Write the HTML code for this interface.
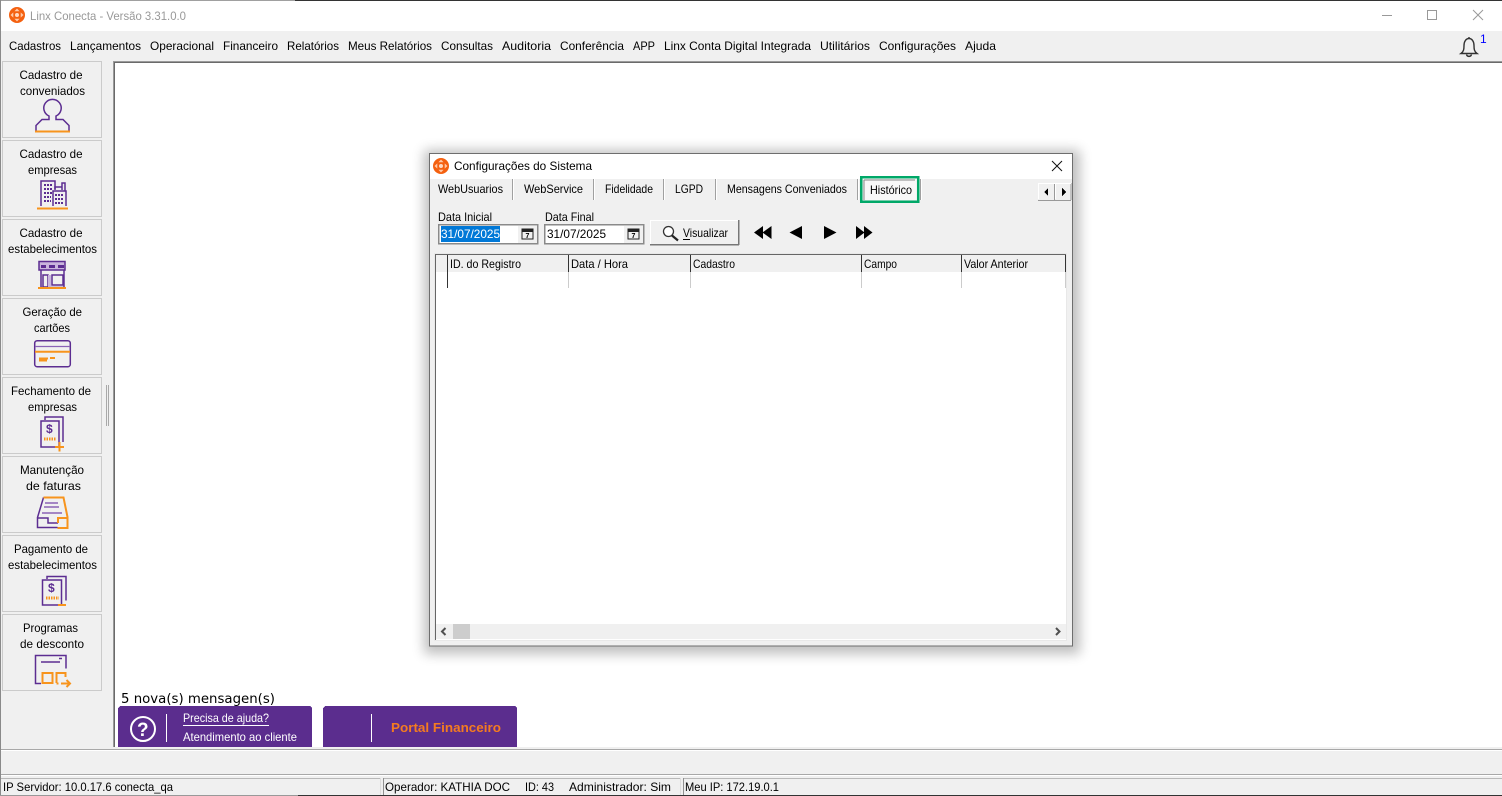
<!DOCTYPE html>
<html lang="pt-BR"><head><meta charset="utf-8"><title>Linx Conecta</title>
<style>
html,body{margin:0;padding:0;background:#f0f0f0;overflow:hidden}
svg{display:block}
text{font-family:"Liberation Sans",sans-serif;font-size:12px;fill:#000;white-space:pre}
.g{fill:none;stroke:#5c2d91;stroke-width:1.5}
.o{fill:none;stroke:#f7941d;stroke-width:2}
.b{fill:#f0f0f0;stroke:#cbcbcb}
</style></head><body>
<svg width="1502" height="796" viewBox="0 0 1502 796" xmlns="http://www.w3.org/2000/svg" shape-rendering="crispEdges">
<defs>
<filter id="sh" x="-10%" y="-10%" width="120%" height="120%"><feGaussianBlur stdDeviation="6"/></filter>
<g id="logo"><circle cx="0" cy="0" r="8" fill="#f4600f" shape-rendering="auto"/><path d="M0-6.500l2.600 2.800h-5.200zM0 6.500l2.600-2.800h-5.200zM-6.500 0l2.800-2.600v5.200zM6.500 0l-2.800-2.600v5.200z" fill="#ffc9a8" shape-rendering="auto"/><circle r="2" fill="#ffd9c2" shape-rendering="auto"/></g>
</defs>
<rect width="1502" height="796" fill="#f0f0f0"/>
<!-- title -->
<rect x="0" y="0" width="1502" height="31" fill="#fff"/>
<rect x="0" y="0" width="295" height="1" fill="#a0a0a0"/><rect x="295" y="0" width="1207" height="1" fill="#333"/>
<use href="#logo" x="17" y="15"/>
<text x="30" y="20" textLength="156" lengthAdjust="spacingAndGlyphs" style="fill:#999">Linx Conecta - Versão 3.31.0.0</text>
<rect x="1382" y="15" width="10" height="1" fill="#999"/>
<rect x="1427.500" y="10.500" width="9" height="9" fill="none" stroke="#999"/>
<path d="M1473 10l10 10M1483 10l-10 10" stroke="#999" fill="none" shape-rendering="auto"/>
<!-- menu -->
<g>
<text x="9" y="50" textLength="52" lengthAdjust="spacingAndGlyphs">Cadastros</text>
<text x="70" y="50" textLength="71" lengthAdjust="spacingAndGlyphs">Lançamentos</text>
<text x="150" y="50" textLength="64" lengthAdjust="spacingAndGlyphs">Operacional</text>
<text x="223" y="50" textLength="55" lengthAdjust="spacingAndGlyphs">Financeiro</text>
<text x="287" y="50" textLength="52" lengthAdjust="spacingAndGlyphs">Relatórios</text>
<text x="348" y="50" textLength="84" lengthAdjust="spacingAndGlyphs">Meus Relatórios</text>
<text x="441" y="50" textLength="52" lengthAdjust="spacingAndGlyphs">Consultas</text>
<text x="502" y="50" textLength="49" lengthAdjust="spacingAndGlyphs">Auditoria</text>
<text x="560" y="50" textLength="64" lengthAdjust="spacingAndGlyphs">Conferência</text>
<text x="633" y="50" textLength="22" lengthAdjust="spacingAndGlyphs">APP</text>
<text x="664" y="50" textLength="147" lengthAdjust="spacingAndGlyphs">Linx Conta Digital Integrada</text>
<text x="820" y="50" textLength="50" lengthAdjust="spacingAndGlyphs">Utilitários</text>
<text x="879" y="50" textLength="77" lengthAdjust="spacingAndGlyphs">Configurações</text>
<text x="965" y="50" textLength="31" lengthAdjust="spacingAndGlyphs">Ajuda</text>
</g>
<path d="M1461 53.500c2.800-2 3-4.500 3-8 0-4 2-7 5-7s5 3 5 7c0 3.500.2 6 3 8zM1466.500 54.500a2.600 2.600 0 0 0 5 0M1469 38.500v-1.500" fill="none" stroke="#333" stroke-width="1.400" shape-rendering="auto"/>
<text x="1480" y="43" style="fill:#0000ff">1</text>
<!-- main panel -->
<rect x="113" y="61" width="1389" height="687" fill="#fff"/>
<rect x="113" y="61" width="1389" height="1" fill="#9a9a9a"/>
<rect x="113" y="62" width="1389" height="1" fill="#6a6a6a"/>
<rect x="113" y="61" width="1" height="687" fill="#9a9a9a"/>
<rect x="114" y="62" width="1" height="686" fill="#6a6a6a"/>
<rect x="106" y="385" width="1" height="41" fill="#a8a8a8"/><rect x="108" y="385" width="1" height="41" fill="#a8a8a8"/>
<!-- sidebar -->
<g>
<rect class="b" x="2.500" y="61.500" width="99" height="76"/>
<rect class="b" x="2.500" y="140.500" width="99" height="76"/>
<rect class="b" x="2.500" y="219.500" width="99" height="76"/>
<rect class="b" x="2.500" y="298.500" width="99" height="76"/>
<rect class="b" x="2.500" y="377.500" width="99" height="76"/>
<rect class="b" x="2.500" y="456.500" width="99" height="76"/>
<rect class="b" x="2.500" y="535.500" width="99" height="76"/>
<rect class="b" x="2.500" y="614.500" width="99" height="76"/>
<text x="19.500" y="79" textLength="63" lengthAdjust="spacingAndGlyphs">Cadastro de</text>
<text x="20" y="95" textLength="65" lengthAdjust="spacingAndGlyphs">conveniados</text>
<text x="19.500" y="158" textLength="63" lengthAdjust="spacingAndGlyphs">Cadastro de</text>
<text x="28" y="174" textLength="49" lengthAdjust="spacingAndGlyphs">empresas</text>
<text x="19.500" y="237" textLength="63" lengthAdjust="spacingAndGlyphs">Cadastro de</text>
<text x="8" y="253" textLength="89" lengthAdjust="spacingAndGlyphs">estabelecimentos</text>
<text x="22.500" y="316" textLength="59.500" lengthAdjust="spacingAndGlyphs">Geração de</text>
<text x="34" y="332" textLength="36" lengthAdjust="spacingAndGlyphs">cartões</text>
<text x="11" y="395" textLength="80" lengthAdjust="spacingAndGlyphs">Fechamento de</text>
<text x="28" y="411" textLength="49" lengthAdjust="spacingAndGlyphs">empresas</text>
<text x="20" y="474" textLength="64" lengthAdjust="spacingAndGlyphs">Manutenção</text>
<text x="26" y="490" textLength="55" lengthAdjust="spacingAndGlyphs">de faturas</text>
<text x="14" y="553" textLength="74" lengthAdjust="spacingAndGlyphs">Pagamento de</text>
<text x="8" y="569" textLength="89" lengthAdjust="spacingAndGlyphs">estabelecimentos</text>
<text x="23" y="632" textLength="55" lengthAdjust="spacingAndGlyphs">Programas</text>
<text x="20" y="648" textLength="64" lengthAdjust="spacingAndGlyphs">de desconto</text>
</g>
<g shape-rendering="auto">
<!-- person -->
<path class="g" d="M36 130.500v-5l6-6h7v-3.500a8.700 8.700 0 1 1 7 0v3.500h7l6 6v5"/>
<path class="o" d="M35 131.500h35"/>
<!-- buildings -->
<path class="g" d="M41 206v-25h14v8"/>
<path d="M44 185h8M44 189h8M44 193h8M44 197h7M44 201h7" stroke="#5c2d91" stroke-width="2" stroke-dasharray="2 1" fill="none"/>
<path class="g" d="M53 206v-15h13v15M55 190v-3h7v3M62 187v-4h3v8"/>
<path d="M55 195h9M55 199h9M55 203h9" stroke="#5c2d91" stroke-width="2" stroke-dasharray="2 1" fill="none"/>
<path class="o" d="M37 208.500h31"/>
<!-- store -->
<path d="M39 261.500h26v8.500h-26z" fill="#c9b5dd" stroke="#5c2d91" stroke-width="1.500"/>
<rect x="41" y="265" width="5" height="3" fill="#5c2d91"/><rect x="49" y="265" width="6" height="3" fill="#5c2d91"/><rect x="58" y="265" width="6" height="3" fill="#5c2d91"/>
<path class="g" d="M41 270v17.500h23v-17.500M43 275h5v12h-5zM52 275h11v10h-11z"/>
<rect x="48" y="275" width="3" height="12" fill="#c9b5dd"/>
<path class="o" d="M38 288h28" stroke-width="1.500"/>
<!-- card -->
<rect class="g" x="34.700" y="340.700" width="35.600" height="26" rx="2.500"/>
<path d="M35 346.500h35" stroke="#8a63b6" stroke-width="1.200" fill="none"/>
<path class="o" d="M35 351.700h35M39 358.500h9M50 358h5M39 360.500h8" stroke-width="1.500"/>
<!-- doc + -->
<path class="g" d="M45 420v-3h18v25M41 421h18v26h-18z"/>
<text x="46" y="433" style="font-weight:bold;font-size:12px;fill:#5c2d91">$</text>
<path d="M44 439h12" stroke="#f7941d" stroke-width="3" stroke-dasharray="1.500 1" fill="none"/>
<path d="M59.500 442v9.500M55 447h9" stroke="#f7941d" stroke-width="2" fill="none"/>
<!-- tray -->
<path class="g" d="M43.500 497.500l-6 20v10h20M37.500 518h10.500v5h10"/>
<path class="o" d="M43.500 497.500h20l4 19.500v11h-10"/>
<path class="o" d="M58 523v-5h9.500"/>
<path d="M45 503h13M44 507h15M42 513h20" stroke="#8a63b6" stroke-width="1.500" fill="none"/>
<!-- payment -->
<path class="g" d="M47 579v-2.500h19v24M42.500 580h19v25h-19z"/>
<text x="48" y="592" style="font-weight:bold;font-size:12px;fill:#5c2d91">$</text>
<path d="M46 598h13" stroke="#f7941d" stroke-width="3" stroke-dasharray="1.500 1" fill="none"/>
<path d="M58 605h8" stroke="#f7941d" stroke-width="2" fill="none"/>
<!-- discount -->
<path class="g" d="M41 683.500h-5.500v-28h30.500v13M41 662h19M59 658.500h3"/>
<path class="o" d="M42.500 673h10v10h-10zM56.500 683v-10h9v4M56.500 683.500h2M61 683.500h9M66.500 680l3.500 3.500-3.500 3.500"/>
</g>
<!-- dialog -->
<rect x="424" y="150" width="656" height="504" fill="#000" opacity=".25" filter="url(#sh)"/>
<rect x="429.500" y="153.500" width="643" height="492.500" fill="#f0f0f0" stroke="#6e6e6e"/>
<rect x="430" y="154" width="642" height="25" fill="#fff"/>
<use href="#logo" x="441" y="166"/>
<text x="454" y="170" textLength="138" lengthAdjust="spacingAndGlyphs">Configurações do Sistema</text>
<path d="M1052 161l10 10M1062 161l-10 10" stroke="#111" fill="none" shape-rendering="auto"/>
<!-- tabs -->
<text x="438" y="193" textLength="65" lengthAdjust="spacingAndGlyphs">WebUsuarios</text>
<rect x="512" y="179" width="1" height="21" fill="#a0a0a0"/><rect x="513" y="179" width="1" height="21" fill="#fff"/>
<text x="524" y="193" textLength="59" lengthAdjust="spacingAndGlyphs">WebService</text>
<rect x="593" y="179" width="1" height="21" fill="#a0a0a0"/><rect x="594" y="179" width="1" height="21" fill="#fff"/>
<text x="605" y="193" textLength="48" lengthAdjust="spacingAndGlyphs">Fidelidade</text>
<rect x="663" y="179" width="1" height="21" fill="#a0a0a0"/><rect x="664" y="179" width="1" height="21" fill="#fff"/>
<text x="675" y="193" textLength="28" lengthAdjust="spacingAndGlyphs">LGPD</text>
<rect x="715" y="179" width="1" height="21" fill="#a0a0a0"/><rect x="716" y="179" width="1" height="21" fill="#fff"/>
<text x="727" y="193" textLength="120" lengthAdjust="spacingAndGlyphs">Mensagens Conveniados</text>
<rect x="857" y="179" width="1" height="21" fill="#a0a0a0"/><rect x="858" y="179" width="1" height="21" fill="#fff"/>
<rect x="920" y="179" width="1" height="21" fill="#a0a0a0"/><rect x="921" y="179" width="1" height="21" fill="#fff"/>
<rect x="864" y="180" width="52" height="20" fill="#f8f8f8"/>
<path d="M864 180h51M864 180v20" stroke="#888" fill="none"/>
<rect x="861" y="177" width="57" height="24.500" fill="none" stroke="#00a868" stroke-width="2.500"/>
<text x="870" y="194" textLength="42" lengthAdjust="spacingAndGlyphs">Histórico</text>
<!-- tab scroll -->
<rect x="1038" y="183" width="17" height="17" fill="#f0f0f0"/><rect x="1055" y="183" width="16" height="17" fill="#f0f0f0"/>
<path d="M1038 200.500h33M1054.500 183v17M1071 183v17" stroke="#999" fill="none"/>
<path d="M1038.500 183v16M1038 183.500h33M1055.500 184v15" stroke="#fff" fill="none"/>
<path d="M1048 188v8l-4-4zM1062 188v8l4-4z" fill="#000"/>
<!-- date -->
<text x="438" y="221" textLength="54" lengthAdjust="spacingAndGlyphs">Data Inicial</text>
<text x="545" y="221" textLength="49" lengthAdjust="spacingAndGlyphs">Data Final</text>
<rect x="438.500" y="224.500" width="99" height="19" fill="#fff" stroke="#8a8a8a" stroke-width="1.500"/>
<rect x="441" y="226" width="59" height="16" fill="#0078d7"/>
<text x="441" y="238" textLength="59" lengthAdjust="spacingAndGlyphs" style="fill:#fff">31/07/2025</text>
<rect x="518" y="226" width="19" height="17" fill="#f0f0f0"/>
<g id="cal"><rect x="522" y="229" width="11" height="10" fill="#f0f0f0" stroke="#222"/><rect x="522" y="229" width="11" height="3" fill="#222"/><text x="525.500" y="238" style="font-size:7px;font-weight:bold">7</text></g>
<rect x="544.500" y="224.500" width="99" height="19" fill="#fff" stroke="#8a8a8a" stroke-width="1.500"/>
<text x="547" y="238" textLength="59" lengthAdjust="spacingAndGlyphs">31/07/2025</text>
<rect x="624" y="226" width="19" height="17" fill="#f0f0f0"/>
<use href="#cal" x="106"/>
<!-- button -->
<rect x="650" y="220" width="89" height="25" fill="#f0f0f0"/>
<path d="M650.500 245v-24.500h88" stroke="#fff" fill="none"/>
<path d="M650 244.500h89M738.500 220v25" stroke="#777" fill="none" stroke-width="1.500"/>
<g shape-rendering="auto"><circle cx="668.500" cy="231.500" r="5" fill="#fff" stroke="#333" stroke-width="1.300"/><path d="M672 235.500l6 5" stroke="#222" stroke-width="2.200"/></g>
<text x="683" y="237" textLength="45" lengthAdjust="spacingAndGlyphs">Visualizar</text>
<rect x="683" y="239" width="7" height="1" fill="#000"/>
<!-- nav -->
<g shape-rendering="auto" fill="#000">
<path d="M763 226v13l-9-6.500zM771.500 226v13l-9-6.500z"/>
<path d="M802 226v13l-12.500-6.500z"/>
<path d="M824 226v13l12.500-6.500z"/>
<path d="M856 226v13l8.500-6.500zM864 226v13l8.500-6.500z"/>
</g>
<!-- grid -->
<rect x="435" y="254" width="631" height="386" fill="#fff"/>
<rect x="436" y="255" width="630" height="17" fill="#f0f0f0"/>
<rect x="434.500" y="253.500" width="632" height="387" fill="none" stroke="#e8e8e8"/>
<rect x="435" y="254" width="631" height="1" fill="#666"/>
<rect x="435" y="254" width="1" height="386" fill="#666"/>
<rect x="447" y="255" width="1" height="33" fill="#333"/>
<rect x="568" y="255" width="1" height="17" fill="#333"/><rect x="568" y="272" width="1" height="16" fill="#ccc"/>
<rect x="690" y="255" width="1" height="17" fill="#333"/><rect x="690" y="272" width="1" height="16" fill="#ccc"/>
<rect x="861" y="255" width="1" height="17" fill="#333"/><rect x="861" y="272" width="1" height="16" fill="#ccc"/>
<rect x="961" y="255" width="1" height="17" fill="#333"/><rect x="961" y="272" width="1" height="16" fill="#ccc"/>
<rect x="1065" y="255" width="1" height="17" fill="#333"/><rect x="1065" y="272" width="1" height="16" fill="#ccc"/>
<text x="450" y="268" textLength="71" lengthAdjust="spacingAndGlyphs">ID. do Registro</text>
<text x="571" y="268" textLength="57" lengthAdjust="spacingAndGlyphs">Data / Hora</text>
<text x="693" y="268" textLength="42" lengthAdjust="spacingAndGlyphs">Cadastro</text>
<text x="864" y="268" textLength="33" lengthAdjust="spacingAndGlyphs">Campo</text>
<text x="964" y="268" textLength="64" lengthAdjust="spacingAndGlyphs">Valor Anterior</text>
<rect x="436" y="624" width="630" height="15" fill="#f0f0f0"/>
<rect x="453" y="624" width="17" height="15" fill="#cdcdcd"/>
<path d="M445.500 628l-3.500 3.500 3.500 3.500M1056 628l3.500 3.500-3.500 3.500" stroke="#505050" stroke-width="2" fill="none" shape-rendering="auto"/>
<!-- bottom -->
<text x="121" y="703" textLength="154" lengthAdjust="spacingAndGlyphs" style="font-family:'DejaVu Sans',sans-serif;font-size:13px">5 nova(s) mensagen(s)</text>
<path d="M118 748v-40l2-2h190l2 2v40z" fill="#5b2d8e"/>
<path d="M323 748v-40l2-2h190l2 2v40z" fill="#5b2d8e"/>
<circle cx="143" cy="729" r="12" fill="none" stroke="#fff" stroke-width="2" shape-rendering="auto"/>
<text x="137" y="736" style="fill:#fff;font-weight:bold;font-size:19px">?</text>
<rect x="166" y="714" width="1" height="28" fill="#fff"/>
<rect x="371" y="714" width="1" height="28" fill="#fff"/>
<text x="183" y="722" textLength="86" lengthAdjust="spacingAndGlyphs" style="fill:#fff">Precisa de ajuda?</text>
<rect x="183" y="725" width="86" height="1" fill="#fff"/>
<text x="183" y="741" textLength="114" lengthAdjust="spacingAndGlyphs" style="fill:#fff">Atendimento ao cliente</text>
<text x="391" y="732" textLength="110" lengthAdjust="spacingAndGlyphs" style="fill:#f47b20;font-weight:bold;font-size:13px">Portal Financeiro</text>
<!-- lower bars -->
<rect x="0" y="747" width="1502" height="30" fill="#f0f0f0"/>
<rect x="0" y="749" width="1502" height="1" fill="#a8a8a8"/>
<rect x="0" y="750" width="1502" height="1" fill="#fff"/>
<rect x="0" y="774" width="1502" height="1" fill="#a8a8a8"/>
<rect x="0" y="775" width="1502" height="1" fill="#fff"/>
<rect x="0" y="778" width="380" height="1" fill="#b8b8b8"/>
<rect x="383" y="778" width="297" height="1" fill="#b8b8b8"/>
<rect x="683" y="778" width="819" height="1" fill="#b8b8b8"/>
<rect x="0" y="0" width="1" height="796" fill="#8a8a8a"/>
<rect x="380" y="778" width="1" height="17" fill="#ddd"/>
<rect x="383" y="778" width="1" height="17" fill="#909090"/>
<rect x="680" y="778" width="1" height="17" fill="#ddd"/>
<rect x="683" y="778" width="1" height="17" fill="#909090"/>
<text x="3" y="791" textLength="170" lengthAdjust="spacingAndGlyphs">IP Servidor: 10.0.17.6 conecta_qa</text>
<text x="385" y="791" textLength="125" lengthAdjust="spacingAndGlyphs">Operador: KATHIA DOC</text>
<text x="525" y="791" textLength="29" lengthAdjust="spacingAndGlyphs">ID: 43</text>
<text x="569" y="791" textLength="102" lengthAdjust="spacingAndGlyphs">Administrador: Sim</text>
<text x="685" y="791" textLength="94" lengthAdjust="spacingAndGlyphs">Meu IP: 172.19.0.1</text>
<rect x="0" y="795" width="298" height="1" fill="#999"/>
<rect x="298" y="795" width="1204" height="1" fill="#333"/>
</svg>
</body></html>
